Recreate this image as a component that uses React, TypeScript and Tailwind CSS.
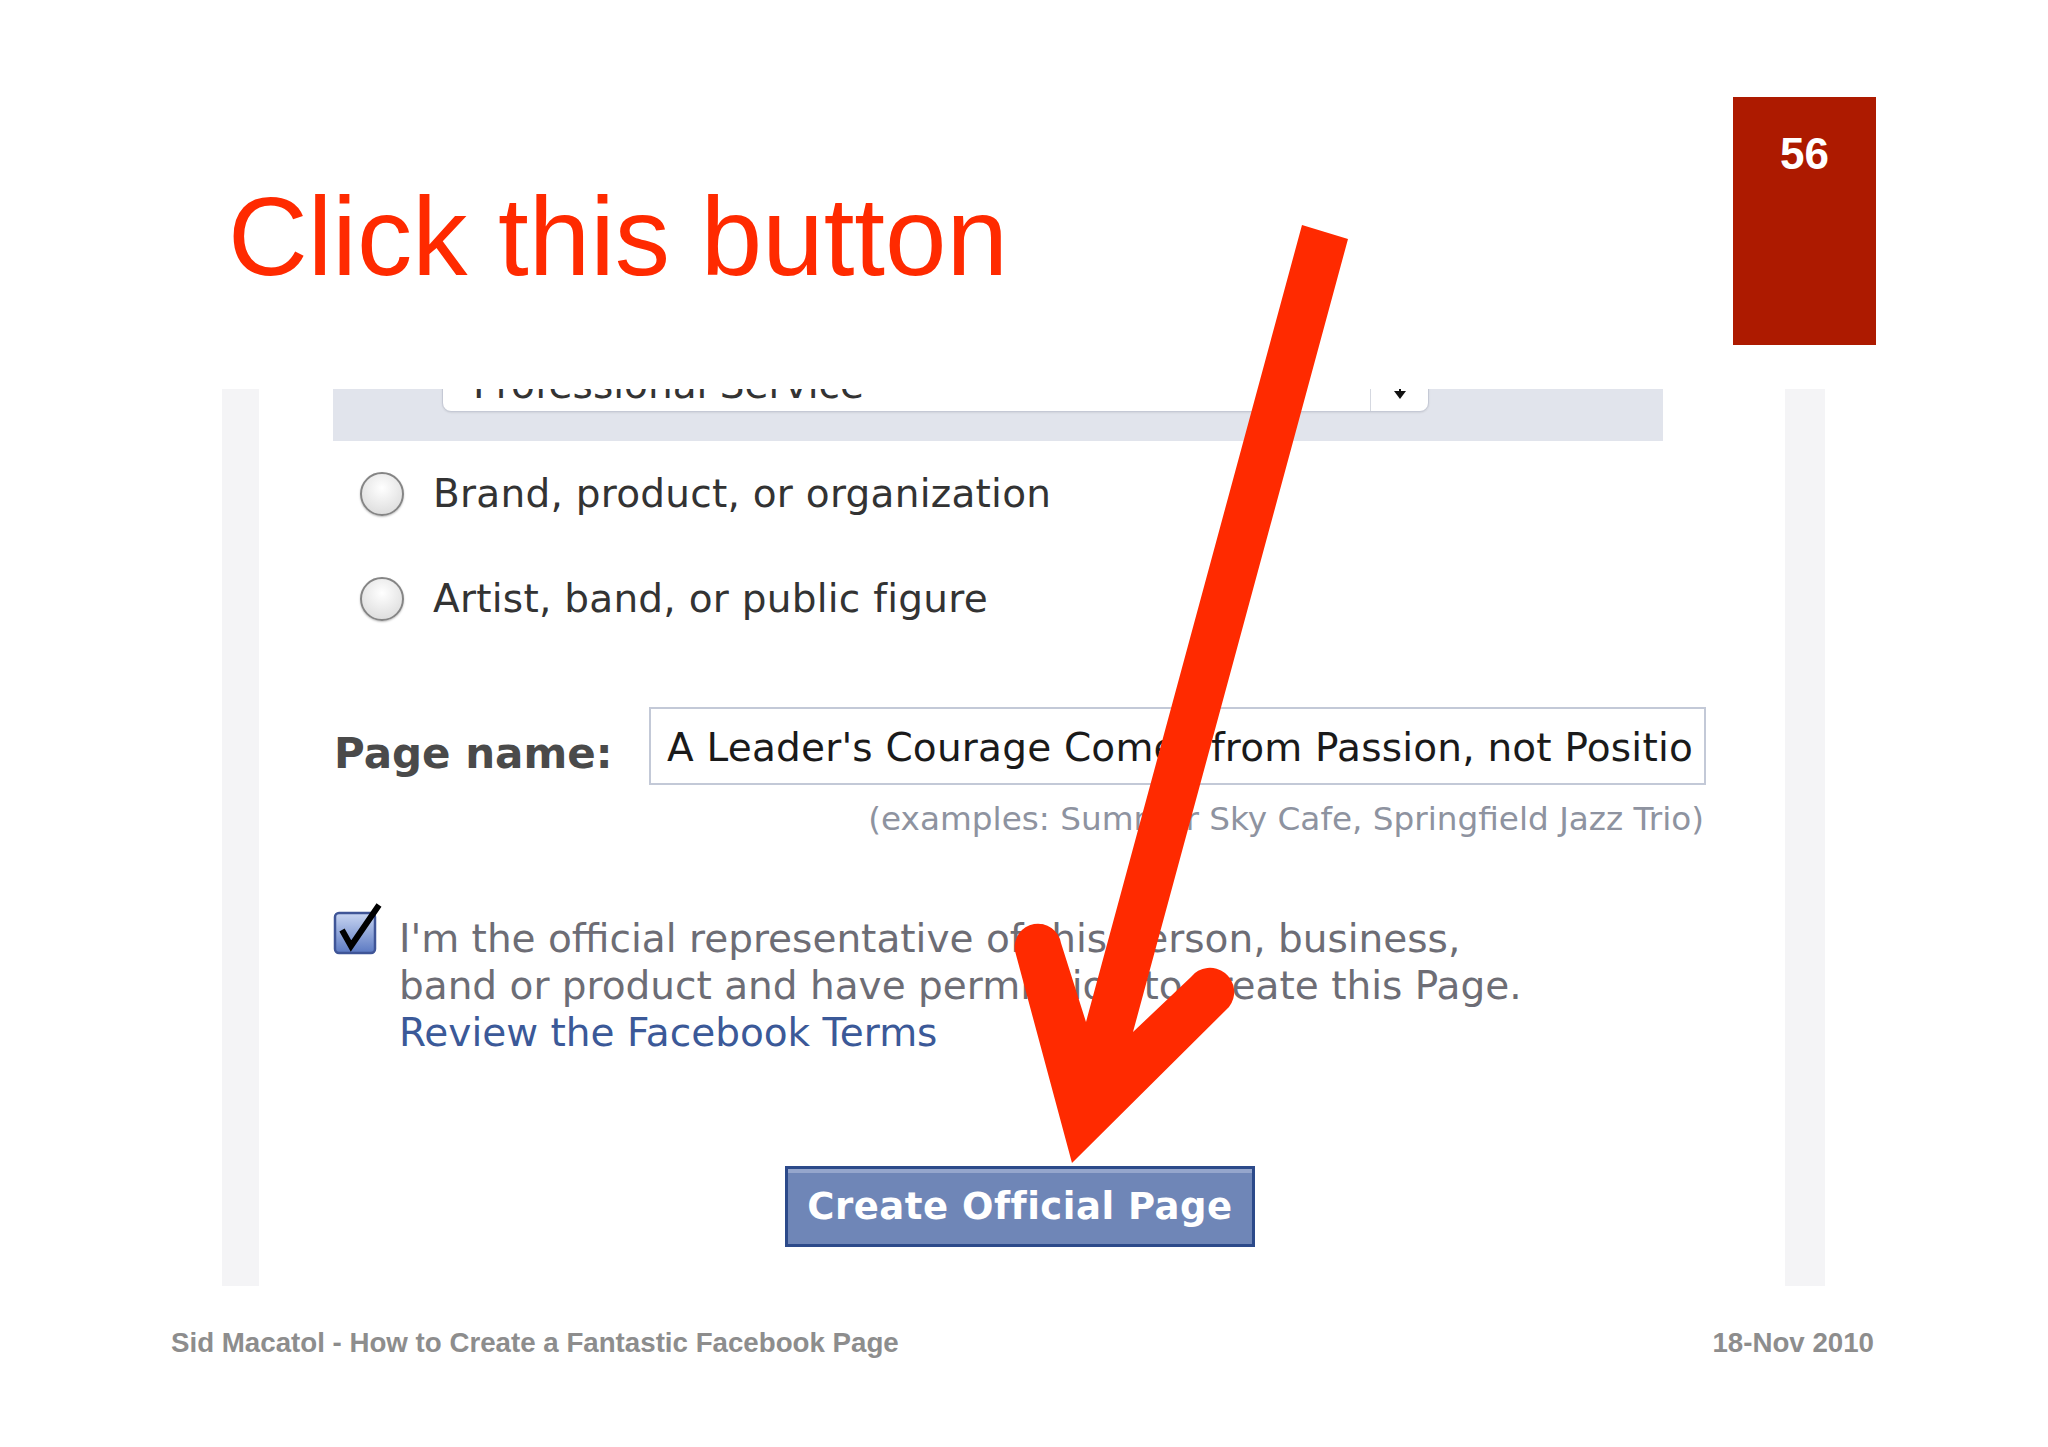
export default function App() {
  return (
    <div className="relative h-[1447px] w-[2048px] overflow-hidden bg-white font-['Liberation_Sans',Arial,sans-serif]">
      {/* slide header */}
      <header className="flex items-start pt-[97px]">
        <h1 className="ml-[228px] mt-[85px] text-[110.5px] font-normal leading-none text-[#ff2a00]">
          Click this button
        </h1>
        <div className="ml-auto mr-[172px] flex h-[248px] w-[143px] justify-center bg-[#ad1a00] pt-[35px]">
          <span className="text-[44px] font-bold leading-none text-white">56</span>
        </div>
      </header>

      {/* facebook screenshot */}
      <section className="ml-[222px] mt-[44px] flex h-[897px] w-[1603px] overflow-hidden">
        <div className="w-[37px] bg-[#f4f4f6]" />
        <div className="flex flex-1 flex-col items-start bg-white pl-[74px] font-['DejaVu_Sans',sans-serif]">
          <div className="flex h-[52px] w-[1330px] items-start bg-[#e1e4ec]">
            <div className="ml-[109px] mt-[-37px] flex h-[60px] w-[987px] rounded-b-[9px] border border-[#c5c9d5] bg-white shadow-[0_1px_2px_rgba(0,0,0,0.08)]">
              <div className="flex-1 pl-[30px] pt-[12px] text-[39px] leading-none text-[#333]">
                Professional Service
              </div>
              <div className="flex w-[58px] justify-center border-l border-[#d5d8e0] pt-[20px]">
                <svg width="14" height="26" viewBox="0 0 14 26">
                  <path d="M7 0 L13 8 L1 8 Z M7 26 L13 18 L1 18 Z M6 8 H8 V18 H6 Z" fill="#111" />
                </svg>
              </div>
            </div>
          </div>

          <div className="ml-[27px] mt-[33px] flex h-[39px] items-center">
            <span className="h-[44px] w-[44px] shrink-0 rounded-full border-2 border-[#858585] bg-[radial-gradient(circle_at_50%_35%,#ffffff,#d6d6d6)] shadow-[0_1px_2px_rgba(0,0,0,0.25)]" />
            <span className="ml-[29px] text-[39px] leading-none tracking-[0.25px] text-[#333]">
              Brand, product, or organization
            </span>
          </div>
          <div className="ml-[27px] mt-[66px] flex h-[39px] items-center">
            <span className="h-[44px] w-[44px] shrink-0 rounded-full border-2 border-[#858585] bg-[radial-gradient(circle_at_50%_35%,#ffffff,#d6d6d6)] shadow-[0_1px_2px_rgba(0,0,0,0.25)]" />
            <span className="ml-[29px] text-[39px] leading-none tracking-[0.25px] text-[#333]">
              Artist, band, or public figure
            </span>
          </div>

          <div className="mt-[89px] flex items-start">
            <label className="ml-[1px] mt-[26px] w-[315px] text-[42px] font-bold leading-none text-[#4a4a4a]">
              Page name:
            </label>
            <div className="h-[78px] w-[1057px] overflow-hidden whitespace-nowrap border-2 border-[#c3c9d7] bg-white pl-[16px] pt-[19px] text-[39px] leading-none tracking-[0.2px] text-[#1a1a1a]">
              A Leader's Courage Comes from Passion, not Positio
            </div>
          </div>
          <div className="mt-[18px] w-[1373px] pr-[2px] text-right text-[32.7px] leading-none text-[#8e93a0]">
            (examples: Summer Sky Cafe, Springfield Jazz Trio)
          </div>

          <div className="mt-[66px] flex items-start">
            <svg width="50" height="54" viewBox="0 0 50 54" className="shrink-0">
              <defs>
                <linearGradient id="cb" x1="0" y1="0" x2="0" y2="1">
                  <stop offset="0" stopColor="#c9d6f2" />
                  <stop offset="1" stopColor="#5b79c2" />
                </linearGradient>
              </defs>
              <rect x="2" y="11" width="40" height="40" rx="4" fill="url(#cb)" stroke="#3f5597" strokeWidth="2.5" />
              <path d="M9 28 L18 44 L46 3" fill="none" stroke="#000" strokeWidth="6" strokeLinejoin="miter" />
            </svg>
            <div className="ml-[16px] mt-[13px] text-[39px] leading-[47px] text-[#6d6d75]">
              I'm the official representative of this person, business,
              <br />
              band or product and have permission to create this Page.
              <br />
              <a href="#terms" className="text-[#3b5998]">
                Review the Facebook Terms
              </a>
            </div>
          </div>

          <button className="ml-[452px] mt-[110px] flex h-[81px] w-[470px] items-center justify-center border-[3px] border-[#2c4a8a] bg-[#6f86b7] text-[37px] font-bold leading-none tracking-[0.5px] text-white shadow-[inset_0_4px_0_#95a6cc]">
            Create Official Page
          </button>
        </div>
        <div className="w-[40px] bg-[#f4f4f6]" />
      </section>

      {/* slide footer */}
      <footer className="mt-[43px] flex justify-between pl-[171px] pr-[174px] text-[27.7px] font-bold leading-none text-[#8d8d8d]">
        <span>Sid Macatol - How to Create a Fantastic Facebook Page</span>
        <span>18-Nov 2010</span>
      </footer>

      {/* hand drawn arrow */}
      <svg
        className="pointer-events-none absolute left-0 top-0"
        width="2048"
        height="1447"
        viewBox="0 0 2048 1447"
      >
        <path
          d="M1302 225 L1348 239 L1133 1032 L1191 977 A24 24 0 0 1 1229 1007 L1072 1163 L1015 951 A23 23 0 0 1 1061 943 L1086 1022 Z"
          fill="#ff2a00"
        />
      </svg>
    </div>
  );
}
